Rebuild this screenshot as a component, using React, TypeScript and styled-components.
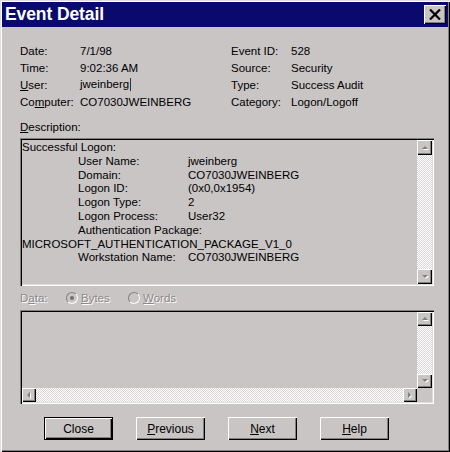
import React from 'react';
import styled, { createGlobalStyle, css } from 'styled-components';

const BG = '#c9c5c5';

const Global = createGlobalStyle`
  html, body { margin: 0; padding: 0; background: ${BG}; }
  #root { width: 450px; height: 452px; }
`;

const Window = styled.div`
  width: 450px;
  height: 452px;
  box-sizing: border-box;
  background: ${BG};
  box-shadow: inset 1px 1px 0 #dfdfdf, inset 2px 2px 0 #fff, inset -1px -1px 0 #000, inset -2px -2px 0 #808080;
  display: flex;
  flex-direction: column;
  font-family: "Liberation Sans", Arial, sans-serif;
  font-size: 11.5px;
  color: #000;
  overflow: hidden;
`;

const TitleBar = styled.div`
  margin: 2px 2px 0 2px;
  height: 25px;
  background: #0a0a6e;
  display: flex;
  align-items: center;
  justify-content: space-between;
  padding: 0 2px 0 3px;
`;

const Title = styled.span`
  color: #fff;
  font-weight: bold;
  font-size: 17.5px;
  letter-spacing: -0.1px;
`;

const CloseBox = styled.div`
  width: 22px;
  height: 19px;
  box-sizing: border-box;
  background: ${BG};
  box-shadow: inset 1px 1px 0 #fff, inset -1px -1px 0 #000, inset -2px -2px 0 #808080;
  display: flex;
  align-items: center;
  justify-content: center;
`;

const Fields = styled.div`
  display: grid;
  grid-template-columns: 60px 151px 60px 1fr;
  grid-auto-rows: 17px;
  align-items: center;
  padding: 15px 0 0 20px;
`;

const Caret = styled.span`
  display: inline-block;
  width: 1px;
  height: 13px;
  background: #333;
  margin-left: 1px;
  vertical-align: -3px;
`;

const SectionLabel = styled.div<{ $disabled?: boolean }>`
  margin: 9px 0 0 20px;
  height: 16px;
  line-height: 16px;
  ${(p) =>
    p.$disabled &&
    css`
      color: #8a8888;
      text-shadow: 1px 1px 0 #fff;
    `}
`;

const Sunken = styled.div<{ $h: number; $mt: number }>`
  margin: ${(p) => p.$mt}px 16px 0 20px;
  height: ${(p) => p.$h}px;
  box-sizing: border-box;
  padding: 2px;
  box-shadow: inset 1px 1px 0 #808080, inset 2px 2px 0 #000, inset -1px -1px 0 #fff, inset -2px -2px 0 #dcdcdc;
  display: grid;
  grid-template-columns: 1fr 15px;
`;

const SunkenGrid = styled(Sunken)`
  grid-template-columns: 1fr 15px;
  grid-template-rows: 1fr 14px;
`;

const TextArea = styled.div`
  padding: 1px 0 0 0;
  line-height: 13.8px;
  white-space: nowrap;
  overflow: hidden;
`;

const Line = styled.div<{ $indent?: boolean }>`
  height: 13.8px;
  padding-left: ${(p) => (p.$indent ? 56 : 0)}px;
  display: flex;
`;

const Key = styled.span`
  width: 110px;
  flex: none;
`;

const VScroll = styled.div`
  display: flex;
  flex-direction: column;
  justify-content: space-between;
  background: repeating-conic-gradient(#fff 0 25%, #d8d6d6 0 50%) 0 0 / 2px 2px;
`;

const HScroll = styled.div`
  display: flex;
  justify-content: space-between;
  background: repeating-conic-gradient(#fff 0 25%, #d8d6d6 0 50%) 0 0 / 2px 2px;
`;

const Corner = styled.div`
  background: ${BG};
`;

const ArrowBtn = styled.div<{ $w: number; $h: number }>`
  width: ${(p) => p.$w}px;
  height: ${(p) => p.$h}px;
  box-sizing: border-box;
  background: ${BG};
  box-shadow: inset 1px 1px 0 #fff, inset -1px -1px 0 #000, inset -2px -2px 0 #808080;
  display: flex;
  align-items: center;
  justify-content: center;
`;

const Empty = styled.div``;

const DataRow = styled.div`
  margin: 4px 0 0 20px;
  height: 16px;
  display: flex;
  align-items: center;
  color: #8a8888;
  text-shadow: 1px 1px 0 #fff;
`;

const DataLabel = styled.span`
  width: 46px;
`;

const RadioItem = styled.span<{ $w: number }>`
  width: ${(p) => p.$w}px;
  display: flex;
  align-items: center;
  gap: 3px;
`;

const RadioCircle = styled.span`
  width: 12px;
  height: 12px;
  flex: none;
  border-radius: 50%;
  box-sizing: border-box;
  border: 1px solid;
  border-color: #808080 #fff #fff #808080;
  background: ${BG};
  display: flex;
  align-items: center;
  justify-content: center;
  text-shadow: none;
`;

const Dot = styled.span`
  width: 4px;
  height: 4px;
  border-radius: 50%;
  background: #707070;
`;

const Buttons = styled.div`
  margin: 13px 0 0 44px;
  display: flex;
  gap: 23px;
`;

const Button = styled.div<{ $default?: boolean }>`
  width: 69px;
  height: 23px;
  box-sizing: border-box;
  display: flex;
  align-items: center;
  justify-content: center;
  background: ${BG};
  font-size: 12px;
  box-shadow: ${(p) =>
    p.$default
      ? 'inset 0 0 0 1px #000, inset 2px 2px 0 #fff, inset -2px -2px 0 #000, inset -3px -3px 0 #808080'
      : 'inset 1px 1px 0 #fff, inset -1px -1px 0 #000, inset -2px -2px 0 #808080'};
`;

type Dir = 'up' | 'down' | 'left' | 'right';
const tri: Record<Dir, string> = {
  up: '1,5 4,2 7,5',
  down: '1,2 4,5 7,2',
  left: '5,1 2,4 5,7',
  right: '2,1 5,4 2,7',
};

const Arrow = ({ dir, w = 15, h = 15 }: { dir: Dir; w?: number; h?: number }) => (
  <ArrowBtn $w={w} $h={h}>
    <svg width="8" height="8" viewBox="0 0 8 8">
      <polygon points={tri[dir]} fill="#fff" transform="translate(1,1)" />
      <polygon points={tri[dir]} fill="#808080" />
    </svg>
  </ArrowBtn>
);

const details: [string, string][] = [
  ['User Name:', 'jweinberg'],
  ['Domain:', 'CO7030JWEINBERG'],
  ['Logon ID:', '(0x0,0x1954)'],
  ['Logon Type:', '2'],
  ['Logon Process:', 'User32'],
];

export default function App() {
  return (
    <>
      <Global />
      <Window>
        <TitleBar>
          <Title>Event Detail</Title>
          <CloseBox>
            <svg width="12" height="11" viewBox="0 0 12 11">
              <path d="M1 0.5 L11 10.5 M11 0.5 L1 10.5" stroke="#000" strokeWidth="2.2" />
            </svg>
          </CloseBox>
        </TitleBar>

        <Fields>
          <span>Date:</span>
          <span>7/1/98</span>
          <span>Event ID:</span>
          <span>528</span>
          <span>Time:</span>
          <span>9:02:36 AM</span>
          <span>Source:</span>
          <span>Security</span>
          <span>
            <u>U</u>ser:
          </span>
          <span>
            jweinberg
            <Caret />
          </span>
          <span>Type:</span>
          <span>Success Audit</span>
          <span>
            Co<u>m</u>puter:
          </span>
          <span>CO7030JWEINBERG</span>
          <span>Category:</span>
          <span>Logon/Logoff</span>
        </Fields>

        <SectionLabel>
          <u>D</u>escription:
        </SectionLabel>
        <Sunken $h={148} $mt={3}>
          <TextArea>
            <Line>Successful Logon:</Line>
            {details.map(([k, v]) => (
              <Line $indent key={k}>
                <Key>{k}</Key>
                <span>{v}</span>
              </Line>
            ))}
            <Line $indent>Authentication Package:</Line>
            <Line>MICROSOFT_AUTHENTICATION_PACKAGE_V1_0</Line>
            <Line $indent>
              <Key>Workstation Name:</Key>
              <span>CO7030JWEINBERG</span>
            </Line>
          </TextArea>
          <VScroll>
            <Arrow dir="up" />
            <Arrow dir="down" />
          </VScroll>
        </Sunken>

        <DataRow>
          <DataLabel>
            D<u>a</u>ta:
          </DataLabel>
          <RadioItem $w={62}>
            <RadioCircle>
              <Dot />
            </RadioCircle>
            <span>
              <u>B</u>ytes
            </span>
          </RadioItem>
          <RadioItem $w={70}>
            <RadioCircle />
            <span>
              <u>W</u>ords
            </span>
          </RadioItem>
        </DataRow>

        <SunkenGrid $h={94} $mt={4}>
          <Empty />
          <VScroll>
            <Arrow dir="up" h={14} />
            <Arrow dir="down" h={14} />
          </VScroll>
          <HScroll>
            <Arrow dir="left" w={14} h={14} />
            <Arrow dir="right" w={14} h={14} />
          </HScroll>
          <Corner />
        </SunkenGrid>

        <Buttons>
          <Button $default>Close</Button>
          <Button>
            <span>
              <u>P</u>revious
            </span>
          </Button>
          <Button>
            <span>
              <u>N</u>ext
            </span>
          </Button>
          <Button>
            <span>
              <u>H</u>elp
            </span>
          </Button>
        </Buttons>
      </Window>
    </>
  );
}
